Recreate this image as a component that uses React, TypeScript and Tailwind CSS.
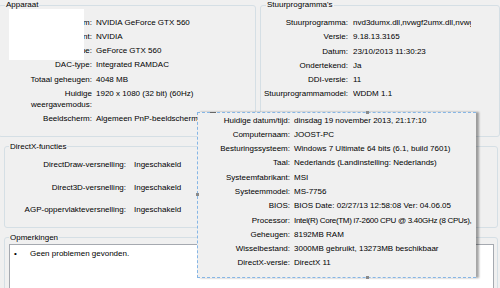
import React from 'react';

const apparaat: [React.ReactNode, string][] = [
  ['Naam:', 'NVIDIA GeForce GTX 560'],
  ['Fabrikant:', 'NVIDIA'],
  ['Chiptype:', 'GeForce GTX 560'],
  ['DAC-type:', 'Integrated RAMDAC'],
  ['Totaal geheugen:', '4048 MB'],
  [<>Huidige<br />weergavemodus:</>, '1920 x 1080 (32 bit) (60Hz)'],
  ['Beeldscherm:', 'Algemeen PnP-beeldscherm'],
];

const stuurprogrammas: [string, string][] = [
  ['Stuurprogramma:', 'nvd3dumx.dll,nvwgf2umx.dll,nvwgf2umx.dll'],
  ['Versie:', '9.18.13.3165'],
  ['Datum:', '23/10/2013 11:30:23'],
  ['Ondertekend:', 'Ja'],
  ['DDI-versie:', '11'],
  ['Stuurprogrammamodel:', 'WDDM 1.1'],
];

const directx: [string, string][] = [
  ['DirectDraw-versnelling:', 'Ingeschakeld'],
  ['Direct3D-versnelling:', 'Ingeschakeld'],
  ['AGP-oppervlakteversnelling:', 'Ingeschakeld'],
];

const systeem: [string, string][] = [
  ['Huidige datum/tijd:', 'dinsdag 19 november 2013, 21:17:10'],
  ['Computernaam:', 'JOOST-PC'],
  ['Besturingssysteem:', 'Windows 7 Ultimate 64 bits (6.1, build 7601)'],
  ['Taal:', 'Nederlands (Landinstelling: Nederlands)'],
  ['Systeemfabrikant:', 'MSI'],
  ['Systeemmodel:', 'MS-7756'],
  ['BIOS:', 'BIOS Date: 02/27/13 12:58:08 Ver: 04.06.05'],
  ['Processor:', 'Intel(R) Core(TM) i7-2600 CPU @ 3.40GHz (8 CPUs),'],
  ['Geheugen:', '8192MB RAM'],
  ['Wisselbestand:', '3000MB gebruikt, 13273MB beschikbaar'],
  ['DirectX-versie:', 'DirectX 11'],
];

export default function App() {
  return (
    <div className="relative w-[500px] h-[288px] overflow-hidden bg-[#f0f0f0] text-[8px] text-black font-['Liberation_Sans',Arial,sans-serif]">
      <div className="flex flex-col">
        {/* top row: Apparaat + Stuurprogramma's */}
        <div className="flex gap-[4px] ml-[-2px] h-[137px]">
          <fieldset className="w-[280px] min-w-0 h-[137px] border border-[#d5dfe5] rounded-[3px]">
            <legend className="ml-[6px] px-[1px] leading-[10px]">Apparaat</legend>
            <div className="grid grid-cols-[93px_1fr] gap-x-[4px] gap-y-[3.3px] leading-[11px] pt-[6.5px]">
              {apparaat.map(([l, v], i) => (
                <React.Fragment key={i}>
                  <div className="text-right whitespace-nowrap">{l}</div>
                  <div className="whitespace-nowrap">{v}</div>
                </React.Fragment>
              ))}
            </div>
          </fieldset>
          <fieldset className="w-[240px] min-w-0 shrink-0 h-[137px] border border-[#d5dfe5] rounded-[3px]">
            <legend className="ml-[5px] px-[1px] leading-[10px]">Stuurprogramma's</legend>
            <div className="grid grid-cols-[87px_118px] gap-x-[5px] gap-y-[3.3px] leading-[11px] pt-[7px]">
              {stuurprogrammas.map(([l, v]) => (
                <React.Fragment key={l}>
                  <div className="text-right whitespace-nowrap">{l}</div>
                  <div className="whitespace-nowrap overflow-hidden">{v}</div>
                </React.Fragment>
              ))}
            </div>
          </fieldset>
        </div>

        <fieldset className="mt-[4.5px] ml-[4px] w-[494px] min-w-0 h-[86px] border border-[#d5dfe5] rounded-[3px]">
          <legend className="ml-[4px] px-[1px] leading-[10px]">DirectX-functies</legend>
          <div className="grid grid-cols-[121px_1fr] gap-x-[8px] gap-y-[11.5px] leading-[11px] pt-[7.5px]">
            {directx.map(([l, v]) => (
              <React.Fragment key={l}>
                <div className="text-right whitespace-nowrap">{l}</div>
                <div className="whitespace-nowrap">{v}</div>
              </React.Fragment>
            ))}
          </div>
        </fieldset>

        <fieldset className="mt-[5px] ml-[4px] w-[494px] min-w-0 h-[70px] border border-[#d5dfe5] rounded-[3px] pl-[4px] pr-[3px]">
          <legend className="px-[1px] leading-[10px]">Opmerkingen</legend>
          <div className="mt-[1.5px] h-[60px] bg-white border border-[#a5a9b0] pl-[4px] pt-[2.5px] leading-[11px]">
            <div className="flex">
              <span className="w-[16px]">•</span>
              <span>Geen problemen gevonden.</span>
            </div>
          </div>
        </fieldset>
      </div>

      {/* redaction */}
      <div className="absolute left-[9px] top-[9px] w-[75px] h-[51px] bg-white" />

      {/* system info snippet lying over the window */}
      <div className="absolute left-[197px] top-[112px] w-[279px] h-[166px] bg-[#f0f0f0] border border-r-0 border-dashed border-[#86b6e6] shadow-[3px_0_2px_rgba(0,0,0,0.35)]">
        <div className="overflow-hidden h-full">
          <div className="grid grid-cols-[92px_1fr] gap-x-[4px] gap-y-[3.3px] leading-[11px] pt-[1.5px]">
            {systeem.map(([l, v]) => (
              <React.Fragment key={l}>
                <div className="text-right whitespace-nowrap">{l}</div>
                <div className={l === 'Processor:' ? 'whitespace-nowrap tracking-[-0.3px]' : 'whitespace-nowrap'}>{v}</div>
              </React.Fragment>
            ))}
          </div>
        </div>
        <span className="absolute left-[12px] top-[-1px] w-[6px] h-[1px] bg-[#666]" />
        <span className="absolute left-[168px] top-[-2px] w-[3px] h-[3px] bg-[#8a8a8a]" />
        <span className="absolute left-[-2px] top-[80px] w-[3px] h-[3px] bg-[#8a8a8a]" />
        <span className="absolute left-[168px] bottom-[-2px] w-[3px] h-[3px] bg-[#8a8a8a]" />
      </div>
    </div>
  );
}
